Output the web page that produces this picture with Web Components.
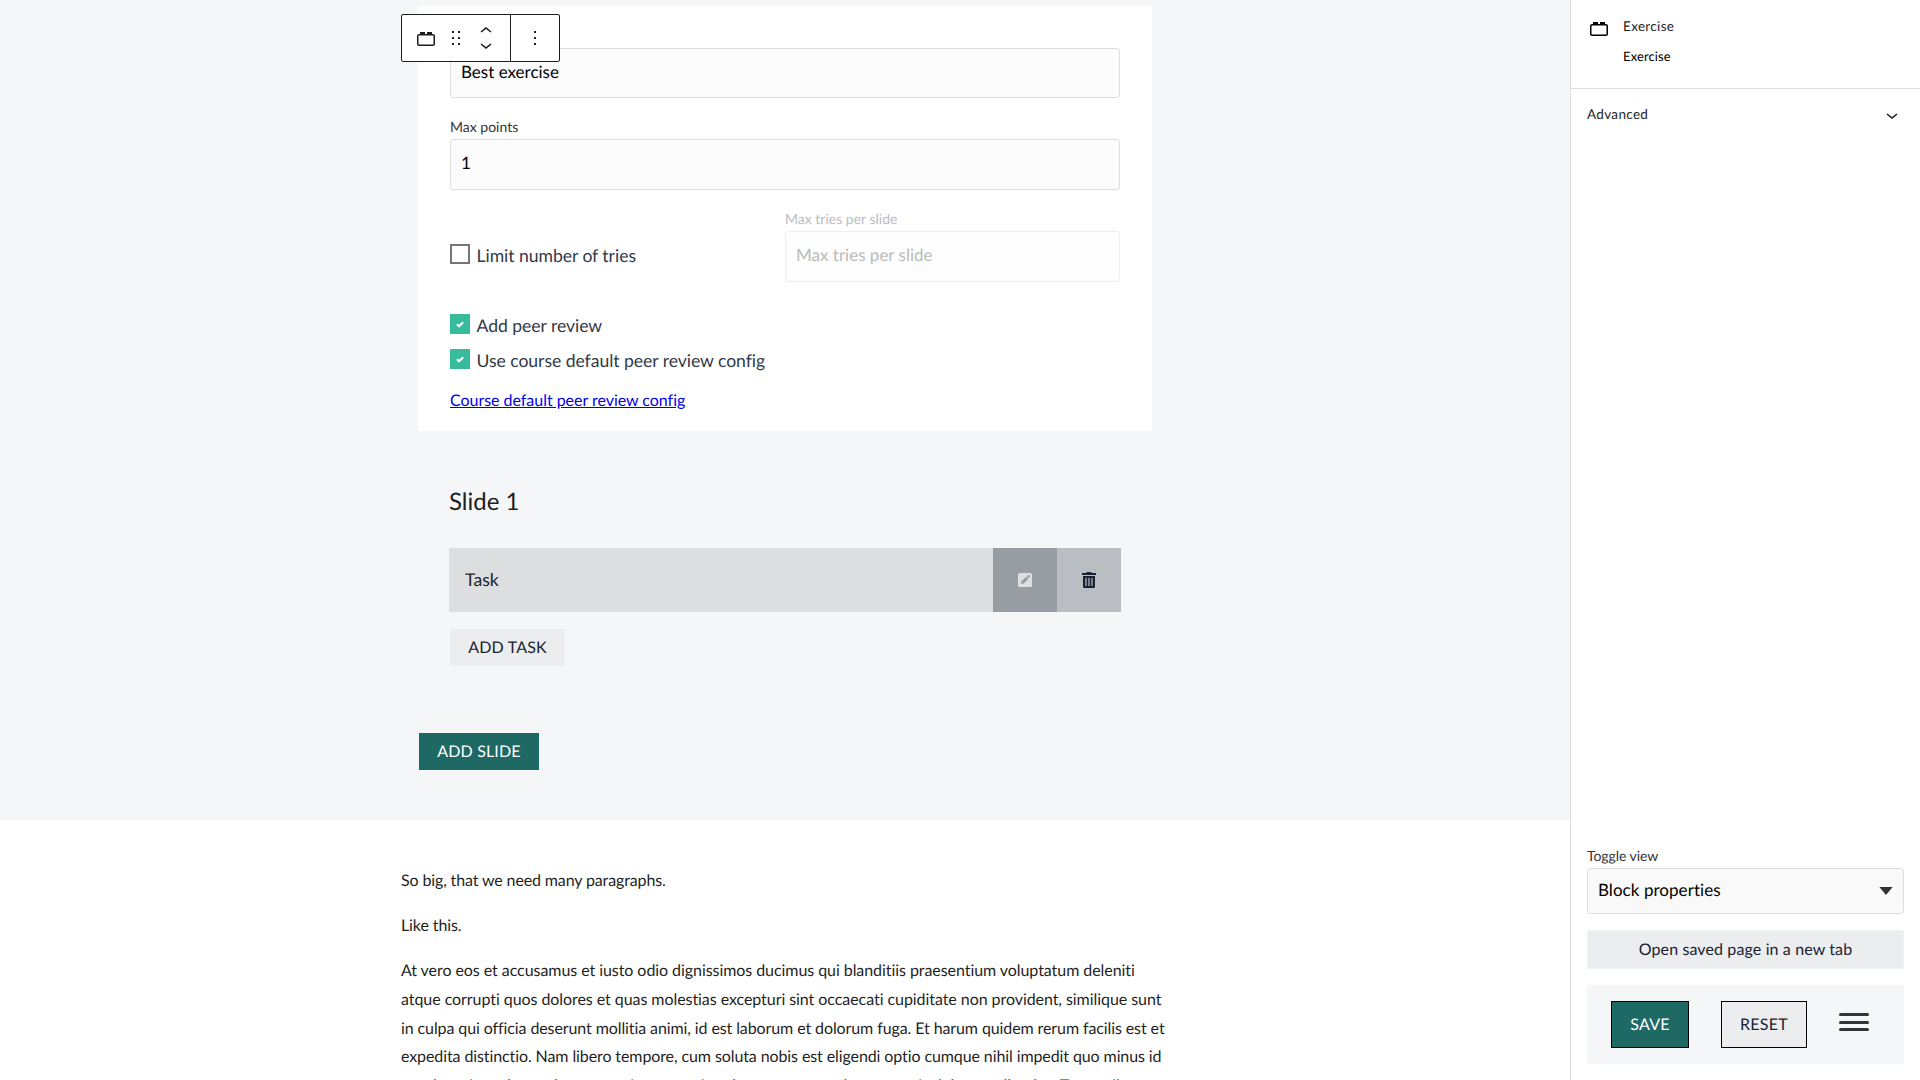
<!DOCTYPE html>
<html lang="en"><head><meta charset="utf-8"><title>Page editor</title>
<style>
body{margin:0;width:1920px;height:1080px;overflow:hidden;background:#fff;font-family:Lato,"Liberation Sans",sans-serif;font-variant-ligatures:none;text-rendering:geometricPrecision}
</style></head><body>
<page-editor></page-editor>
<script>
const define=(name,html)=>customElements.define(name,class extends HTMLElement{
  constructor(){super();this.attachShadow({mode:'open'})}
  connectedCallback(){this.shadowRoot.innerHTML='<style>*{box-sizing:border-box}:host{box-sizing:border-box}</style>'+(typeof html==='function'?html(this):html)}
});

const ICONS={
  block:'M19 8h-1V6h-5v2h-2V6H6v2H5c-1.1 0-2 .9-2 2v8c0 1.1.9 2 2 2h14c1.1 0 2-.9 2-2v-8c0-1.1-.9-2-2-2zm.5 10c0 .3-.2.5-.5.5H5c-.3 0-.5-.2-.5-.5v-8c0-.3.2-.5.5-.5h14c.3 0 .5.2.5.5v8z',
  drag:'M8 7h2V5H8v2zm0 6h2v-2H8v2zm0 6h2v-2H8v2zm6-14v2h2V5h-2zm0 8h2v-2h-2v2zm0 6h2v-2h-2v2z',
  up:'M6.5 12.4L12 8l5.5 4.4-.9 1.2L12 10l-4.5 3.6-1-1.2z',
  down:'M17.5 11.6L12 16l-5.5-4.4.9-1.2L12 14l4.5-3.6 1 1.2z',
  more:'M13 19h-2v-2h2v2zm0-6h-2v-2h2v2zm0-6h-2V5h2v2z'
};
define('ui-icon',el=>`<style>:host{display:block;width:24px;height:24px;flex:none}svg{display:block}</style>
<svg width="24" height="24" viewBox="0 0 24 24" fill="currentColor"><path d="${ICONS[el.getAttribute('name')]}"/></svg>`);

define('block-toolbar',`<style>
:host{display:flex;width:159px;height:48px;background:#fff;border:1px solid #1e1e1e;border-radius:2px;color:#1e1e1e}
.main{display:flex;width:109px;border-right:1px solid #1e1e1e;padding:11px 0 0 12px;gap:6px}
.movers{display:flex;flex-direction:column;margin-top:-7px}
.movers ui-icon+ui-icon{margin-top:-10px}
.opts{padding:11px 0 0 12px}
</style><div class="main"><ui-icon name="block"></ui-icon><ui-icon name="drag"></ui-icon><div class="movers"><ui-icon name="up"></ui-icon><ui-icon name="down"></ui-icon></div></div>
<div class="opts"><ui-icon name="more"></ui-icon></div>`);

define('text-field',el=>`<style>
:host{display:block}:host([disabled]){opacity:.5}
.label{font-size:14px;line-height:16px;height:20px;color:#333}
.box{height:var(--field-height,51px);border:1px solid #dedede;border-radius:3px;background:#fcfcfc;padding-left:10px;font-size:17px;line-height:45px;color:#000}
:host([disabled]) .label{color:#767b85}:host([disabled]) .box{color:#757575}
</style>${el.hasAttribute('label')?`<div class="label">${el.getAttribute('label')}</div>`:''}<div class="box"><slot></slot></div>`);

define('check-box',el=>`<style>
:host{display:flex;gap:6.5px;font-size:17.6px;line-height:20px;color:#313947;height:20px;letter-spacing:-.05px}
i{width:20px;height:20px;border:2px solid #767676;display:block;flex:none}
:host([checked]) i{border:0;background:#37bc9b}
svg{display:none}:host([checked]) svg{display:block}
span{margin-top:2px}
</style><i><svg width="20" height="20" viewBox="0 0 20 20"><path d="M6.9 10.3L9 12.3l4.2-4.1" fill="none" stroke="#fff" stroke-width="2"/></svg></i><span><slot></slot></span>`);

define('ui-button',`<style>
:host{display:flex;align-items:center;justify-content:center;height:37px;font-size:16px;line-height:19px;background:#ebedee;color:#1a2333;letter-spacing:.16px;white-space:nowrap}
:host([primary]){background:#1f6964;color:#fff}
:host([outlined]){border:1px solid #000;height:47px;letter-spacing:.3px}
</style><slot></slot>`);

define('exercise-settings',`<style>
:host{display:block;width:734px;height:425px;background:#fff;padding:42px 32px 0}
.points{margin-top:21px;height:71px}
.tries{display:grid;grid-template-columns:335px 335px;margin-top:21px}
.tries check-box{margin-top:33px}
.review{margin-top:32px}.default{margin-top:15px;--box-height:21px}
a{display:block;width:max-content;margin-top:22px;font-size:16px;line-height:20px;color:#00e;text-decoration:underline;letter-spacing:-.03px}
</style>
<text-field style="--field-height:50px">Best exercise</text-field>
<text-field class="points" label="Max points">1</text-field>
<div class="tries"><check-box>Limit number of tries</check-box><text-field disabled label="Max tries per slide">Max tries per slide</text-field></div>
<check-box class="review" checked>Add peer review</check-box>
<check-box class="default" checked>Use course default peer review config</check-box>
<a>Course default peer review config</a>`);

define('task-row',`<style>
:host{display:flex;width:672px;height:64px;background:#dddedf;border-radius:2px 0 0 2px;color:#1f1f1f;font-size:17.6px;line-height:64px}
.name{flex:1;padding-left:16px}
.edit,.del{width:64px;display:flex;align-items:center;justify-content:center;background:#989ca3}
.del{background:#babdc2}
</style><div class="name"><slot></slot></div>
<div class="edit"><svg width="16" height="16" viewBox="0 0 16 16"><rect x="1" y="1" width="14" height="14" rx="1.6" fill="#dddedf"/><path d="M4 12l.4-2.7 4.9-4.5 2.1 2.1-4.7 4.6zM9.9 4.2l1.2-1.1h1l.8.9v1l-1 1.1z" fill="#989ca3"/></svg></div>
<div class="del"><svg width="16" height="18" viewBox="0 0 16 18"><path d="M1 2h4.2l.8-1h4l.8 1H15v2H1zM2 5h12v10.4q0 1.6-1.6 1.6H3.6Q2 17 2 15.4z" fill="#1a2333"/><path d="M4 7h2v8H4zM7 7h2v8H7zM10 7h2v8h-2z" fill="#7b8089"/></svg></div>`);

define('exercise-block',`<style>
:host{display:block;height:820px;background:#f5f6f8;padding-top:6px}
.column{width:768px;margin:0 auto;position:relative;padding-left:17px}
block-toolbar{position:absolute;left:0;top:8px;z-index:1}
.slide{padding:55px 0 0 31px}
h2{margin:0 0 30px;font-weight:400;font-size:24px;line-height:32px;color:#1f1f1f}
.task{width:115px;margin:17px 0 0 1px}
.add{width:120px;margin:67px 0 0 1px}
</style><div class="column"><block-toolbar></block-toolbar><exercise-settings></exercise-settings>
<div class="slide"><h2>Slide 1</h2><task-row>Task</task-row><ui-button class="task">ADD TASK</ui-button></div>
<ui-button class="add" primary>ADD SLIDE</ui-button></div>`);

define('text-content',`<style>
:host{display:block;width:768px;margin:47.4px auto 0;font-size:16px;line-height:28.8px;color:#1f1f1f;letter-spacing:-.1px}
p{margin:0 0 16px}
.tight{letter-spacing:-.13px}.loose{letter-spacing:-.062px}
</style><p class="tight">So big, that we need many paragraphs.</p><p>Like this.</p><p><span class="loose">At vero eos et accusamus et iusto odio dignissimos ducimus qui blanditiis praesentium voluptatum deleniti atque corrupti quos dolores et quas molestias excepturi sint occaecati cupiditate non provident, similique sunt</span> in culpa qui officia deserunt mollitia animi, id est laborum et dolorum fuga. Et harum quidem rerum facilis est et expedita distinctio. Nam libero tempore, cum soluta nobis est eligendi optio cumque nihil impedit quo minus id quod maxime placeat facere possimus, omnis voluptas assumenda est, omnis dolor repellendus. Temporibus</p>`);

define('block-inspector',`<style>
:host{display:block;font-size:13px;color:#1e1e1e}
.card{display:flex;height:89px;padding:16px;border-bottom:1px solid #ddd;gap:12px}
.card ui-icon{color:#000}
.wide{font-size:13.5px;letter-spacing:.33px;line-height:20px}
.desc{font-size:13px;line-height:20px;margin-top:10px;letter-spacing:.12px;color:#000}
.advanced{display:flex;justify-content:space-between;padding:14px 16px}
.advanced .wide{line-height:22px}
</style><div class="card"><ui-icon name="block"></ui-icon><div><div class="wide">Exercise</div><div class="desc">Exercise</div></div></div>
<div class="advanced"><span class="wide">Advanced</span><ui-icon name="down"></ui-icon></div>`);

define('select-field',el=>`<style>
:host{display:block}.label{font-size:14px;line-height:20px;height:22px;color:#333;letter-spacing:-.05px}
.box{height:46px;border:1px solid #dedede;border-radius:3px;background:#f9f9f9;display:flex;justify-content:space-between;padding:0 10px;font-size:17px;line-height:42px;color:#000;letter-spacing:.05px}
svg{margin-top:18px}
</style><div class="label">${el.getAttribute('label')}</div><div class="box"><span><slot></slot></span><svg width="14" height="8"><path d="M.3 0h13.4L7 8z" fill="#333"/></svg></div>`);

define('editor-actions',`<style>
:host{display:block;padding:0 16px 16px}
.open{height:39px;margin:16px 0;border:1px solid #f1f2f3;letter-spacing:.12px}
.bar{height:79px;background:#f5f6f8;display:flex;padding:16px 24px;gap:32px}
.save{width:78px}.reset{width:86px}
.menu{width:30px;height:18px;margin-top:12px;display:flex;flex-direction:column;justify-content:space-between}
.menu i{height:3px;border-radius:1.5px;background:#333}
</style><select-field label="Toggle view">Block properties</select-field>
<ui-button class="open">Open saved page in a new tab</ui-button>
<div class="bar"><ui-button class="save" primary outlined>SAVE</ui-button><ui-button class="reset" outlined>RESET</ui-button><div class="menu"><i></i><i></i><i></i></div></div>`);

define('page-editor',`<style>
:host{display:flex;width:1920px;height:1080px}
main{width:1570px;height:1080px;overflow:hidden}
aside{width:350px;border-left:1px solid #ddd;display:flex;flex-direction:column;justify-content:space-between}
</style><main><exercise-block></exercise-block><text-content></text-content></main>
<aside><block-inspector></block-inspector><editor-actions></editor-actions></aside>`);
</script></body></html>
